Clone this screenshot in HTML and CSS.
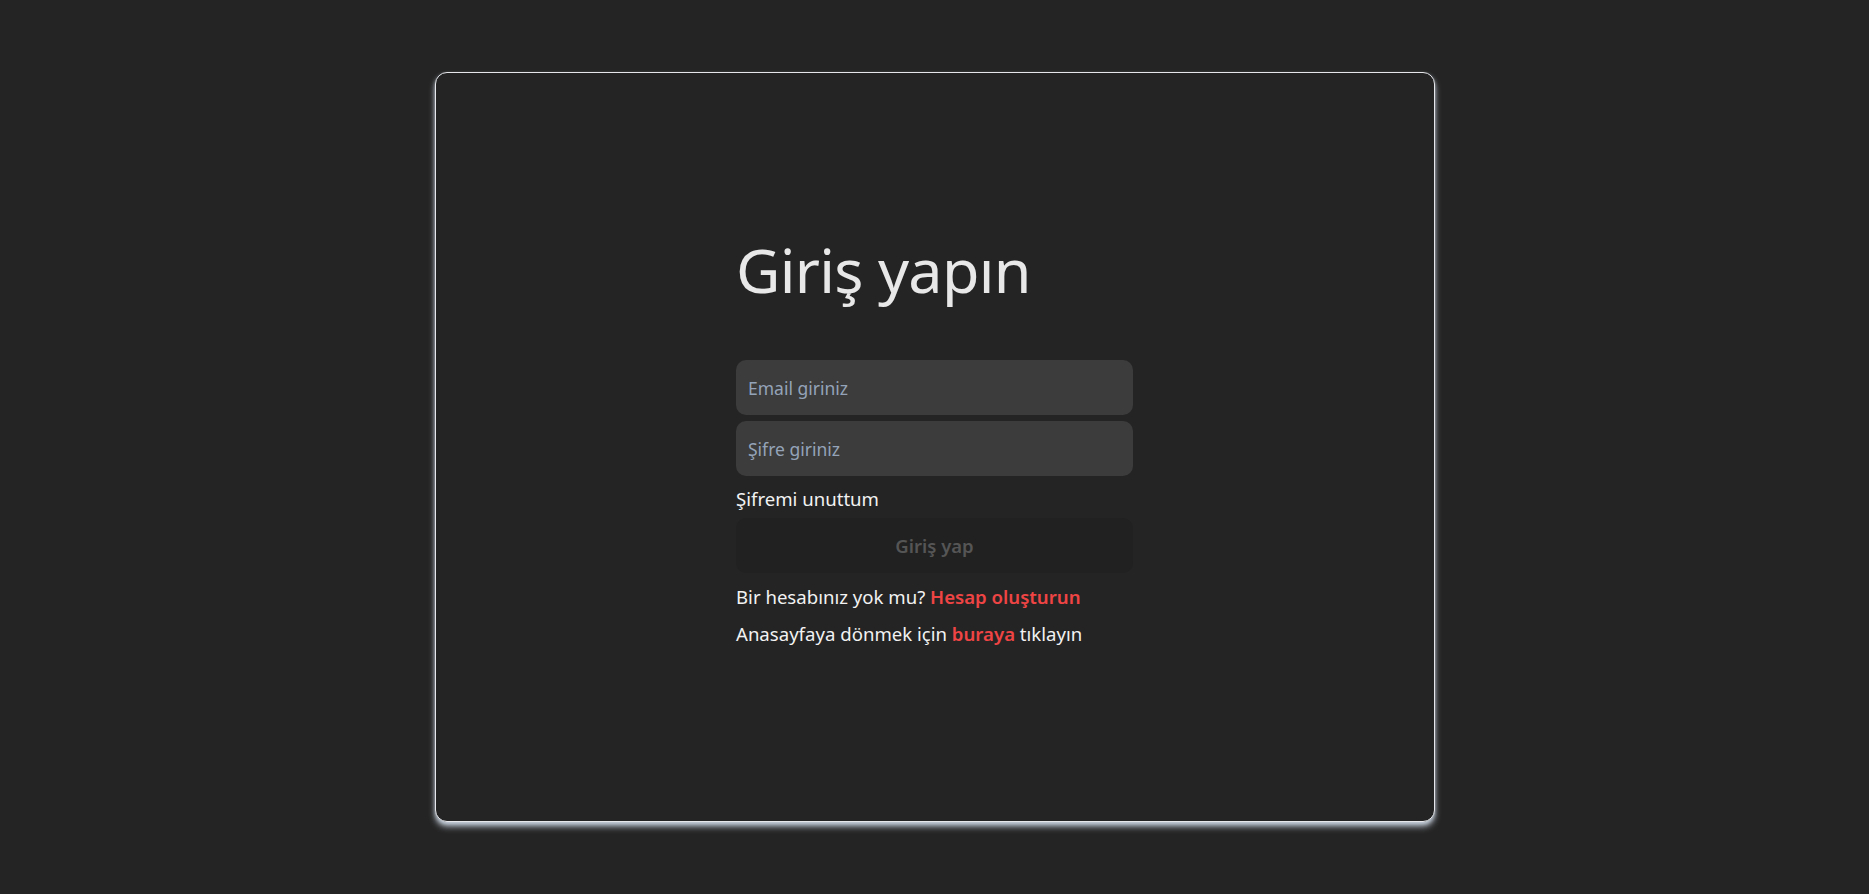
FILE: index.html
```html
<!DOCTYPE html>
<html lang="tr">
<head>
<meta charset="utf-8">
<title>Giriş yapın</title>
<link rel="stylesheet" href="styles.css">
</head>
<body>
<main class="page">
  <section class="card">
    <form class="login">
      <h1 class="title">Giriş yapın</h1>
      <input class="field field-first" type="email" placeholder="Email giriniz">
      <input class="field" type="password" placeholder="Şifre giriniz">
      <a class="forgot" href="#">Şifremi unuttum</a>
      <button class="submit" type="button" disabled>Giriş yap</button>
      <p class="line">Bir hesabınız yok mu? <a class="accent" href="#">Hesap oluşturun</a></p>
      <p class="line">Anasayfaya dönmek için <a class="accent" href="#">buraya</a> tıklayın</p>
    </form>
  </section>
</main>
</body>
</html>
```

FILE: styles.css
```css
html, body {
  margin: 0;
  padding: 0;
  background: #242424;
}
body {
  font-family: "Segoe UI", "Noto Sans", "Open Sans", sans-serif;
  color: #f2f2f2;
  font-size: 18.6px;
}
.page {
  height: 894px;
  display: flex;
  align-items: center;
  justify-content: center;
}
.card {
  box-sizing: border-box;
  width: 1000px;
  height: 750px;
  padding-top: 157px;
  border: 1px solid #e5e7eb;
  border-radius: 12px;
  background: #242424;
  box-shadow: 0 5px 7px -1px rgba(203, 213, 225, 0.95), 0 2px 4px -1px rgba(203, 213, 225, 0.9);
  display: flex;
  align-items: flex-start;
  justify-content: center;
}
.login {
  width: 397px;
  display: flex;
  flex-direction: column;
}
.title {
  margin: 0 0 50px;
  font-weight: 400;
  font-size: 61px;
  line-height: 80px;
  color: #e8e8e8;
  letter-spacing: -0.7px;
}
.field {
  box-sizing: border-box;
  height: 55px;
  border: none;
  border-radius: 10px;
  background: #3c3c3c;
  padding: 0 12px;
  font-family: inherit;
  font-size: 17.5px;
  color: #e8e8e8;
  outline: none;
}
.field::placeholder {
  color: #94a3b8;
}
.field-first {
  margin-bottom: 6px;
}
.forgot {
  color: #f2f2f2;
  text-decoration: none;
  line-height: 26px;
  margin-top: 10px;
}
.submit {
  height: 55px;
  border: none;
  border-radius: 10px;
  background: #212121;
  color: #555555;
  font-family: inherit;
  font-size: 18.5px;
  font-weight: 600;
  margin-top: 6px;
  margin-bottom: 5px;
}
.line {
  margin: 0;
  line-height: 37px;
}
.accent {
  color: #ef4444;
  font-weight: 600;
  text-decoration: none;
}
```
